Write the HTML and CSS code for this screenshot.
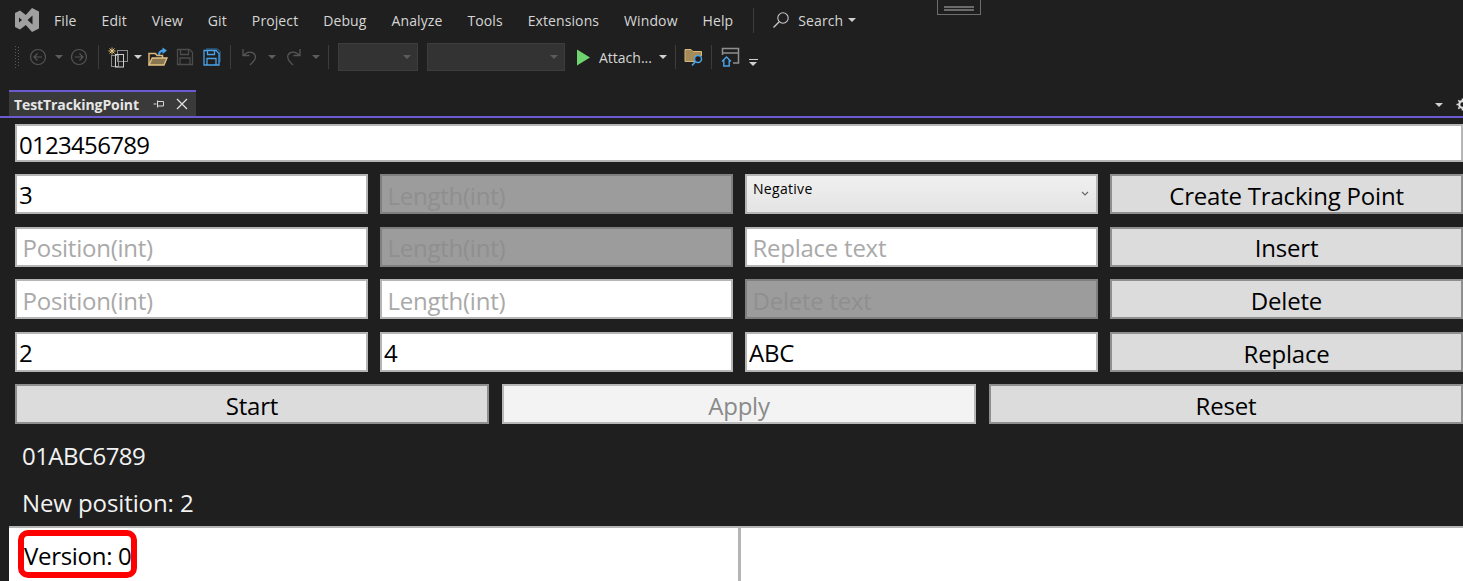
FILE: index.html
```html
<!DOCTYPE html>
<html lang="en">
<head>
<meta charset="utf-8">
<title>TestTrackingPoint</title>
<link rel="stylesheet" href="styles.css">
</head>
<body>
<div class="app">
  <div class="handle"><i></i><i></i></div>
  <header class="menubar">
    <svg class="logo" width="24" height="24" viewBox="0 0 24 24"><path fill="#a0a0a0" fill-rule="evenodd" d="M17 0 L24 3.500 V20.500 L17 24 L10.800 17 L5 21.500 L0 19 V5 L5 2.500 L10.800 7 Z M4 9.500 V14.500 L7 12 Z M17.500 7.500 L12.500 12 L17.500 16.500 Z"/></svg>
    <nav class="menus">
      <span>File</span><span>Edit</span><span>View</span><span>Git</span><span>Project</span><span>Debug</span><span>Analyze</span><span>Tools</span><span>Extensions</span><span>Window</span><span>Help</span>
    </nav>
    <div class="vsep tall"></div>
    <div class="search">
      <svg width="18" height="18" viewBox="0 0 18 18"><circle cx="11" cy="7" r="5.200" fill="none" stroke="#c8c8c8" stroke-width="1.100"/><path d="M7.200 10.800 L1.500 16.500" stroke="#c8c8c8" stroke-width="1.300"/></svg>
      <span>Search</span><b class="caret"></b>
    </div>
  </header>
  <div class="toolbar">
    <svg class="grip" width="6" height="22" viewBox="0 0 6 22"><path d="M1.500 0v22M4.500 1v20" stroke="#5a5a5a" stroke-width="1" stroke-dasharray="1 2" fill="none"/></svg>
    <svg class="ic back" width="18" height="18" viewBox="0 0 18 18"><circle cx="9" cy="9" r="7.500" fill="none" stroke="#555" stroke-width="1.200"/><path d="M13 9H5.500M8.500 5.500L5 9l3.500 3.500" fill="none" stroke="#555" stroke-width="1.200"/></svg>
    <b class="caret dim c1"></b>
    <svg class="ic fwd" width="18" height="18" viewBox="0 0 18 18"><circle cx="9" cy="9" r="7.500" fill="none" stroke="#555" stroke-width="1.200"/><path d="M5 9h7.500M9.500 5.500L13 9l-3.500 3.500" fill="none" stroke="#555" stroke-width="1.200"/></svg>
    <div class="vsep s1"></div>
    <svg class="ic new" width="21" height="21" viewBox="0 0 21 21"><path d="M4 0.500v7M0.500 4h7M1.500 1.500l5 5M6.500 1.500l-5 5" stroke="#e8c77e" stroke-width="1"/><rect x="9.500" y="3.500" width="10" height="11" fill="none" stroke="#8a8a8a"/><rect x="3.500" y="8.500" width="7" height="11" fill="none" stroke="#8a8a8a"/><rect x="7.500" y="7.500" width="8" height="12.500" fill="none" stroke="#d0d0d0"/></svg>
    <b class="caret c2"></b>
    <svg class="ic open" width="20" height="20" viewBox="0 0 20 20"><path d="M1 18V6.500h6.500l1.500 2h5.500V11" fill="none" stroke="#dcb67a" stroke-width="1.500"/><path d="M1 18l3.200-7H19l-3 7z" fill="#8a7650" stroke="#e6c484" stroke-width="1.300"/><path d="M11 8c0-3 2-4.500 5-4.500" fill="none" stroke="#4aa3e8" stroke-width="2"/><path d="M14.500 0.500L19 3.500l-4.500 3.500z" fill="#4aa3e8"/></svg>
    <svg class="ic save" width="18" height="18" viewBox="0 0 18 18"><path d="M1.500 1.500h12l3 3v12h-15z" fill="none" stroke="#4c4c4c" stroke-width="1.300"/><path d="M4.500 2v4.500h8V2M4 16.500V10h10v6.500" fill="none" stroke="#4c4c4c" stroke-width="1.300"/></svg>
    <svg class="ic saveall" width="18" height="18" viewBox="0 0 18 18"><path d="M3 1h11.500L17 3.500V14" fill="none" stroke="#2f74ab" stroke-width="1"/><path d="M1 2.500h12l3 3v11.500H1z" fill="none" stroke="#4aa3e8" stroke-width="1.300"/><path d="M4.500 3v3.500h7V3M4 17v-6.500h9V17" fill="none" stroke="#4aa3e8" stroke-width="1.300"/></svg>
    <div class="vsep s2"></div>
    <svg class="ic undo" width="20" height="20" viewBox="0 0 20 20"><path d="M3 2v6.500h6.500M3.500 8.500C7 4 13 4 15 8c1.500 3.500-1 6-5 10" fill="none" stroke="#555" stroke-width="1.300"/></svg>
    <b class="caret dim c3"></b>
    <svg class="ic redo" width="20" height="20" viewBox="0 0 20 20"><path d="M17 2v6.500h-6.500M16.500 8.500C13 4 7 4 5 8c-1.500 3.500 1 6 5 10" fill="none" stroke="#555" stroke-width="1.300"/></svg>
    <b class="caret dim c4"></b>
    <div class="vsep s3"></div>
    <div class="combo small"><b class="caret dim"></b></div>
    <div class="combo large"><b class="caret dim"></b></div>
    <svg class="ic play" width="14" height="17" viewBox="0 0 14 17"><path d="M1 0.500L14 8.500L1 16.500z" fill="#6fd36f"/></svg>
    <span class="attach">Attach...</span><b class="caret c5"></b>
    <div class="vsep s4"></div>
    <svg class="ic find" width="20" height="20" viewBox="0 0 20 20"><path d="M1 2.500h6l2 2h8.500V9h-6l-1 5.500 -9.500 0z" fill="#a58a5a" stroke="#dcb67a"/><circle cx="14" cy="12" r="3.500" fill="#1f1f1f" stroke="#4aa3e8" stroke-width="1.500"/><path d="M11.500 14.500l-3.500 4" stroke="#4aa3e8" stroke-width="1.600"/></svg>
    <div class="vsep s5"></div>
    <svg class="ic home" width="20" height="20" viewBox="0 0 20 20"><path d="M1.500 8V1.500h16v14.500H12M1.500 6h16" fill="none" stroke="#8f8f8f" stroke-width="1.500"/><path d="M1 14.500l4.500-4.500 4.500 4.500M2.800 13V19h5.400v-6" fill="none" stroke="#4aa3e8" stroke-width="1.400"/></svg>
    <div class="overflow"><i></i><b class="caret"></b></div>
  </div>
  <div class="tabstrip">
    <div class="tab">
      <strong>TestTrackingPoint</strong>
      <svg class="pin" width="12" height="12" viewBox="0 0 12 12"><path d="M0.500 6h3M4.500 2.500v7M4.500 3.500h6v4.500h-6" fill="none" stroke="#d8d8d8"/></svg>
      <svg class="close" width="12" height="12" viewBox="0 0 12 12"><path d="M1 1l10 10M11 1L1 11" stroke="#e0e0e0" stroke-width="1.300"/></svg>
    </div>
    <div class="tabtools">
      <b class="caret"></b>
      <svg width="12" height="13" viewBox="0 0 12 13"><circle cx="6.500" cy="6.500" r="3.300" fill="none" stroke="#ddd" stroke-width="2.200"/><path d="M6.500 0.500v12M0.500 6.500h12M2.300 2.300l8.400 8.400M10.700 2.300l-8.400 8.400" stroke="#ddd" stroke-width="1.600" stroke-dasharray="2 8"/></svg>
    </div>
  </div>
  <main class="content">
    <input class="field top digits" value="0123456789" readonly>
    <div class="grid">
      <input class="field val" value="3" readonly>
      <input class="field off" placeholder="Length(int)" disabled>
      <div class="select"><span>Negative</span><svg width="8" height="6" viewBox="0 0 8 6"><path d="M1 1l3 3 3-3" fill="none" stroke="#666" stroke-width="1.100"/></svg></div>
      <button class="btn">Create Tracking Point</button>

      <input class="field" placeholder="Position(int)" readonly>
      <input class="field off" placeholder="Length(int)" disabled>
      <input class="field" placeholder="Replace text" readonly>
      <button class="btn">Insert</button>

      <input class="field" placeholder="Position(int)" readonly>
      <input class="field" placeholder="Length(int)" readonly>
      <input class="field off" placeholder="Delete text" disabled>
      <button class="btn">Delete</button>

      <input class="field val" value="2" readonly>
      <input class="field val" value="4" readonly>
      <input class="field val" value="ABC" readonly>
      <button class="btn">Replace</button>
    </div>
    <div class="actions">
      <button class="btn">Start</button>
      <button class="btn faded">Apply</button>
      <button class="btn">Reset</button>
    </div>
    <p class="out first">01ABC6789</p>
    <p class="out">New position: 2</p>
  </main>
  <section class="panes">
    <div class="pane left"><span class="version">Version: 0</span><span class="mark"></span></div>
    <div class="pane"></div>
  </section>
</div>
</body>
</html>
```
FILE: styles.css
```css
* { box-sizing: border-box; }
html, body { margin: 0; height: 100%; overflow: hidden; }
body { background: #1f1f1f; font-family: "Open Sans", "Noto Sans", sans-serif; }
.app { position: relative; width: 1463px; height: 581px; overflow: hidden; display: flex; flex-direction: column; }

.handle { position: absolute; left: 937px; top: -2px; width: 44px; height: 17px; border: 1px solid #6e6e6e; display: flex; flex-direction: column; gap: 1px; padding: 7px 6px 0; }
.handle i { display: block; height: 2px; background: #6a6a6a; }

.menubar { height: 40px; display: flex; align-items: center; color: #d6d6d6; font-size: 14px; letter-spacing: 0.1px; padding-left: 15px; flex: none; }
.logo { flex: none; }
.menus { display: flex; margin-left: 15px; gap: 25px; }
.vsep { width: 1px; background: #3c3c3c; flex: none; height: 24px; }
.vsep.tall { height: 25px; margin-left: 20px; }
.search { display: flex; align-items: center; margin-left: 18px; gap: 8px; }
.caret { display: inline-block; width: 0; height: 0; border-left: 4.500px solid transparent; border-right: 4.500px solid transparent; border-top: 4px solid #d0d0d0; flex: none; }
.caret.dim { border-top-color: #5c5c5c; }
.search .caret { margin-left: -3px; }

.toolbar { height: 34px; display: flex; align-items: center; flex: none; padding-left: 14px; color: #d6d6d6; font-size: 14px; }
.ic { flex: none; display: block; }
.back { margin-left: 9px; }
.c1 { margin-left: 8px; }
.fwd { margin-left: 7px; }
.s1 { margin-left: 10px; }
.new { margin-left: 9px; }
.c2 { margin-left: 5px; }
.open { margin-left: 6px; }
.save { margin-left: 8px; }
.saveall { margin-left: 9px; }
.s2 { margin-left: 9px; }
.undo { margin-left: 9px; }
.c3 { margin-left: 8px; }
.redo { margin-left: 7px; }
.c4 { margin-left: 9px; }
.s3 { margin-left: 8px; }
.combo { height: 28px; background: #333; border: 1px solid #3d3d3d; display: flex; align-items: center; justify-content: flex-end; padding-right: 6px; flex: none; }
.combo.small { width: 80px; margin-left: 9px; }
.combo.large { width: 138px; margin-left: 9px; }
.play { margin-left: 11px; }
.attach { margin-left: 9px; }
.c5 { margin-left: 7px; }
.s4 { margin-left: 8px; }
.find { margin-left: 8px; }
.s5 { margin-left: 7px; }
.home { margin-left: 9px; }
.overflow { display: flex; flex-direction: column; align-items: center; gap: 2px; margin: 10px 0 0 8px; }
.overflow i { display: block; width: 9px; height: 1px; background: #d0d0d0; }

.tabstrip { margin-top: 16px; height: 28px; border-bottom: 2px solid #6b5bd2; display: flex; justify-content: space-between; align-items: stretch; padding-left: 9px; flex: none; }
.tab { width: 187px; background: #3a3a3a; border-top: 2px solid #6b5bd2; display: flex; align-items: center; color: #e6e6e6; padding-left: 5px; font-size: 14px; }
.tab strong { font-weight: 700; width: 125px; white-space: nowrap; letter-spacing: -0.1px; }
.pin { margin-left: 14px; }
.close { margin-left: 11px; }
.tabtools { display: flex; align-items: center; gap: 13px; padding-top: 3px; margin-right: -5px; }

.content { flex: 1; padding: 6px 0 0 15px; width: 1500px; display: flex; flex-direction: column; overflow: hidden; min-height: 0; }
.field { height: 40px; width: 353px; border: 2px solid #b5b5b5; background: #fff; font: 24px/1 "Open Sans", "Noto Sans", sans-serif; letter-spacing: -0.25px; color: #000; padding: 2px 2px 0; outline: none; display: block; }
.field.val { padding-top: 0; }
.field::placeholder { color: #a9a9a9; opacity: 1; }
.grid .field::placeholder { padding-left: 3.500px; }
.field.top { width: 1448px; height: 38px; }
.digits { letter-spacing: -0.7px; }
.field.off { background: #9c9c9c; border-color: #7f7f7f; }
.field.off::placeholder { color: #8f8f8f; }
.grid { margin-top: 12px; display: grid; grid-template-columns: repeat(4, 353px); column-gap: 12px; row-gap: 12.700px; }
.select { height: 40px; border: 2px solid #b5b5b5; background: linear-gradient(#f0f0f0, #e4e4e4); display: flex; justify-content: space-between; align-items: flex-start; padding: 3px 7px 0 6px; font-size: 14px; letter-spacing: 0.3px; color: #000; }
.select svg { margin-top: 12px; }
.btn { height: 40px; width: 100%; border: 2px solid #8f8f8f; background: #dcdcdc; font: 24px/1 "Open Sans", "Noto Sans", sans-serif; letter-spacing: -0.2px; color: #000; padding: 3px 0 0; }
.actions { margin-top: 12px; display: grid; grid-template-columns: repeat(3, 474px); column-gap: 13px; }
.btn.faded { background: #f3f3f3; border-color: #b8b8b8; color: #8a8a8a; }
.out { margin: 0; color: #f2f2f2; font-size: 24px; line-height: 33px; padding-left: 7px; letter-spacing: -0.1px; }
.out.first { margin-top: 15px; letter-spacing: -0.55px; }
.out + .out { margin-top: 14px; }

.panes { height: 55px; margin-left: 9px; flex: none; display: grid; grid-template-columns: 732px 1fr; background: #fff; border-top: 2px solid #b5b5b5; position: relative; }
.pane { background: #fff; }
.pane.left { border-right: 3px solid #b5b5b5; padding: 8px 0 0 15px; font-size: 24px; line-height: 40px; letter-spacing: -0.3px; color: #000; }
.mark { position: absolute; left: 9px; top: 2px; width: 119px; height: 48px; border: 6px solid #f00; border-radius: 10px; }
```
